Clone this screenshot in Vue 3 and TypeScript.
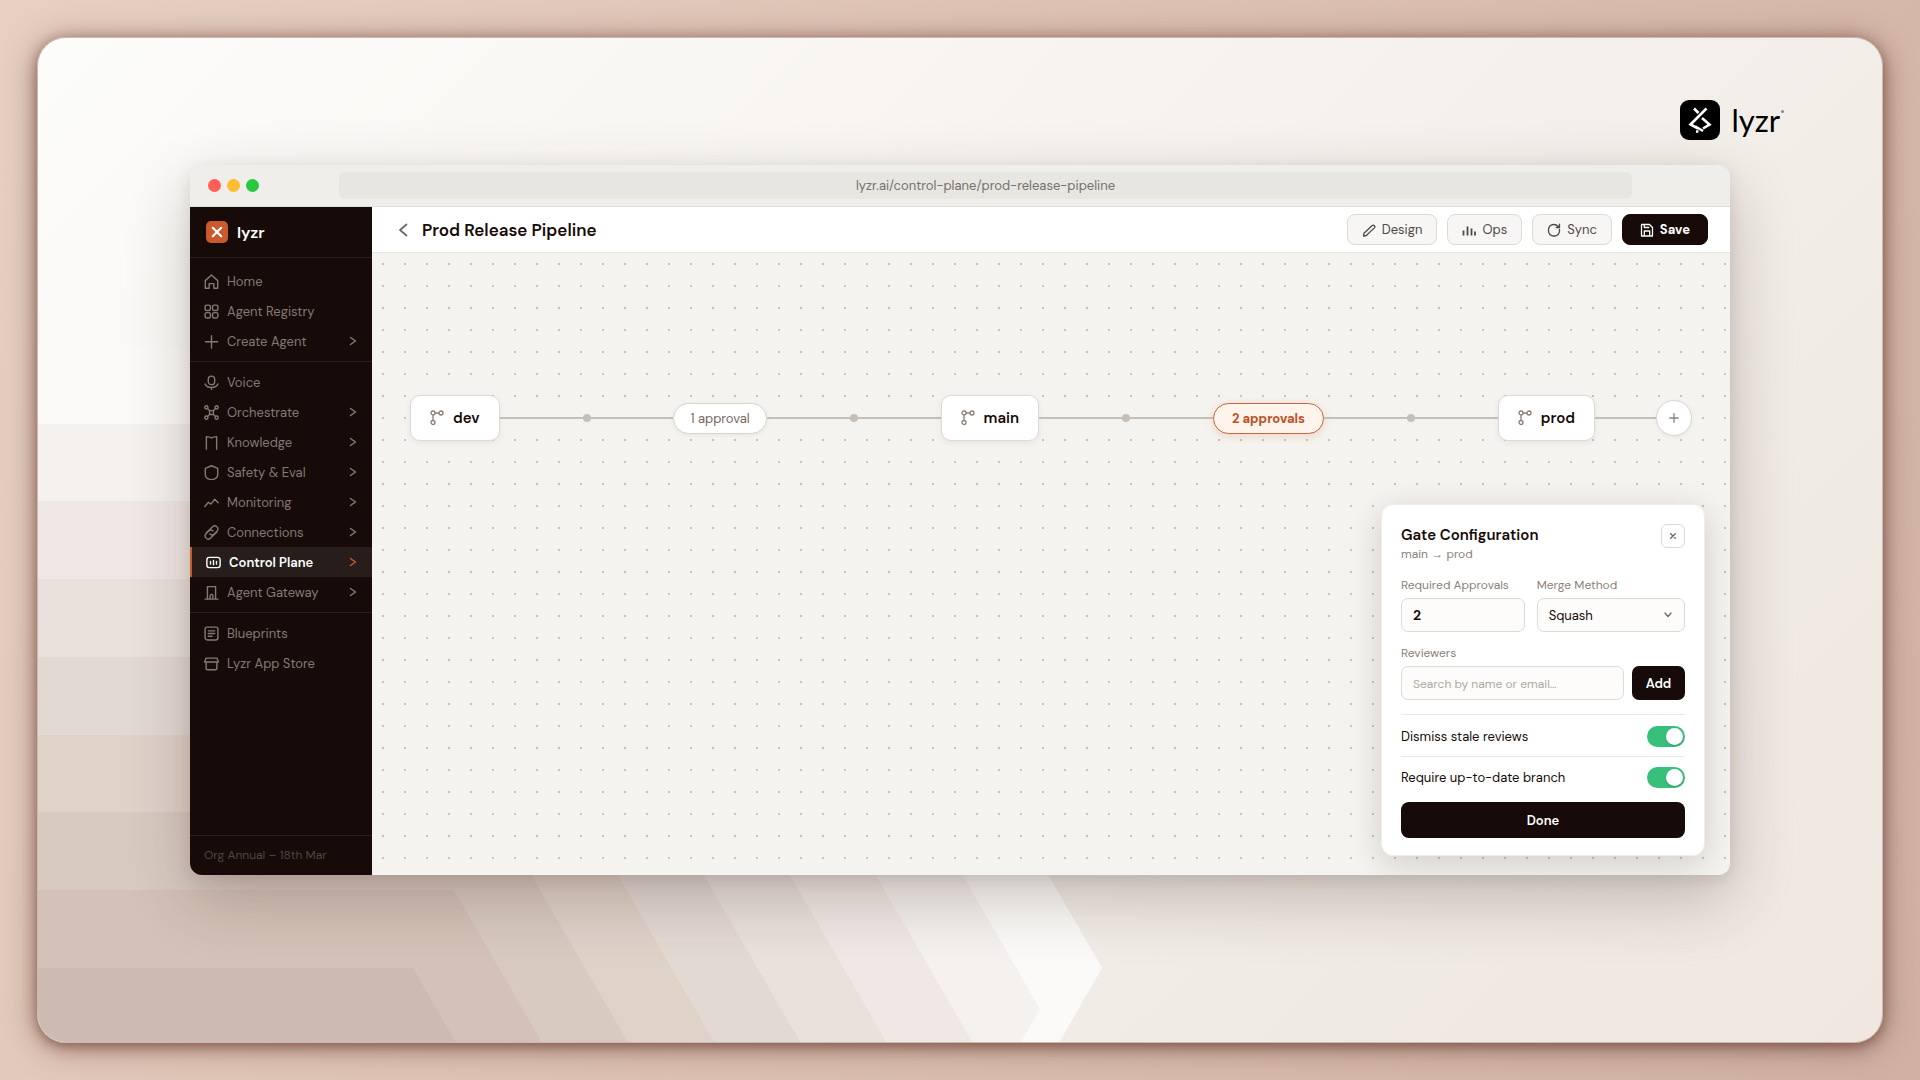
<script setup lang="ts">
import { ref } from 'vue'

interface NavItem {
  label: string
  icon: string
  chevron?: boolean
  active?: boolean
}

const groups: NavItem[][] = [
  [
    { label: 'Home', icon: 'M1.2 6.2 7 1l5.800 5.200V13.300H9.200V9H4.800v4.300H1.200z' },
    {
      label: 'Agent Registry',
      icon: 'M2.500 1h2a1.500 1.500 0 0 1 1.500 1.500v2A1.500 1.500 0 0 1 4.500 6h-2A1.500 1.500 0 0 1 1 4.500v-2A1.500 1.500 0 0 1 2.500 1zM9.500 1h2A1.500 1.500 0 0 1 13 2.500v2A1.500 1.500 0 0 1 11.500 6h-2A1.500 1.500 0 0 1 8 4.500v-2A1.500 1.500 0 0 1 9.500 1zM2.500 8h2A1.500 1.500 0 0 1 6 9.500v2A1.500 1.500 0 0 1 4.500 13h-2A1.500 1.500 0 0 1 1 11.500v-2A1.500 1.500 0 0 1 2.500 8zM9.500 8h2A1.500 1.500 0 0 1 13 9.500v2a1.500 1.500 0 0 1-1.500 1.500h-2A1.500 1.500 0 0 1 8 11.500v-2A1.500 1.500 0 0 1 9.500 8z',
    },
    { label: 'Create Agent', icon: 'M7 1.500v11.500M1.300 7.200h11.400', chevron: true },
  ],
  [
    { label: 'Voice', icon: 'M7 1a3 3 0 0 1 3 3v2a3 3 0 0 1-6 0V4a3 3 0 0 1 3-3zM1 8.300c.8 2 3.200 3.200 6 3.200s5.200-1.200 6-3.200M7 11.500v2.300' },
    {
      label: 'Orchestrate',
      icon: 'M5.200 5.200h3.600v3.600H5.200zM3.300 3.300l1.900 1.900M10.700 3.300 8.800 5.200M3.300 10.700l1.900-1.900M10.700 10.700 8.800 8.800M3.700 2.200a1.500 1.500 0 1 1-3 0a1.500 1.500 0 0 1 3 0zM13.300 2.200a1.500 1.500 0 1 1-3 0a1.500 1.500 0 0 1 3 0zM3.700 11.800a1.500 1.500 0 1 1-3 0a1.500 1.500 0 0 1 3 0zM13.300 11.800a1.500 1.500 0 1 1-3 0a1.500 1.500 0 0 1 3 0z',
      chevron: true,
    },
    { label: 'Knowledge', icon: 'M2.200 13.300V1.500c2 0 3.500.2 4.800 1.300 1.300-1.100 2.800-1.300 4.800-1.300v11.800', chevron: true },
    { label: 'Safety & Eval', icon: 'M7 .7 12.800 3.200v5.800c0 2.600-2.300 4.200-5.800 4.700-3.500-.5-5.800-2.100-5.800-4.700V3.200z', chevron: true },
    { label: 'Monitoring', icon: 'M.8 10.800 4.200 6.800l2.200 1.700L10 4l3.200 3.200', chevron: true },
    {
      label: 'Connections',
      icon: 'M5.600 8.400a2.900 2.900 0 0 0 4 0l2.500-2.600a2.900 2.900 0 0 0-4.100-4.100L2 7.500M8.400 5.600a2.900 2.900 0 0 0-4 0L1.900 8.200a2.900 2.900 0 0 0 4.100 4.100L12 6.500',
      chevron: true,
    },
    {
      label: 'Control Plane',
      icon: 'M3.200 2.200h7.600A2.400 2.400 0 0 1 13.200 4.600v4.800a2.400 2.400 0 0 1-2.400 2.400H3.200A2.400 2.400 0 0 1 .8 9.400V4.600A2.400 2.400 0 0 1 3.200 2.200zM4.200 6v2.500M7 5v4M9.800 6v2.500',
      chevron: true,
      active: true,
    },
    { label: 'Agent Gateway', icon: 'M1 13.200h12M3.200 13V1.500h7.600V13M5.700 13v-3a1.300 1.300 0 0 1 2.600 0v3', chevron: true },
  ],
  [
    { label: 'Blueprints', icon: 'M3 1h8a2 2 0 0 1 2 2v8a2 2 0 0 1-2 2H3a2 2 0 0 1-2-2V3a2 2 0 0 1 2-2zM4 4.500h6M4 7h6M4 9.500h3.500' },
    { label: 'Lyzr App Store', icon: 'M1.800 2h10.400l1.200 3.600H.6zM2 5.600v6.200a1 1 0 0 0 1 1h8a1 1 0 0 0 1-1V5.600' },
  ],
]

const branchIcon =
  'M3 5v5M5 3h4M5 3a2 2 0 1 1-4 0a2 2 0 0 1 4 0zM13 3a2 2 0 1 1-4 0a2 2 0 0 1 4 0zM5 12.500a2 2 0 1 1-4 0a2 2 0 0 1 4 0z'

interface Layer {
  top: number
  points: string
  fill: string
}

// Stacked arrow bands, drawn from the largest to the smallest.
const fills = ['#fbfaf8', '#f4f1ee', '#f0e8e5', '#e9e1dc', '#e3d9d3', '#dfd2c9', '#d8cac1', '#d4c2b8', '#cdbab0']
const layers: Layer[] = fills.map((fill, i) => {
  const top = Math.round(i * 77.7)
  const corner = Math.round(705 - i * 41.3)
  const depth = i === 0 ? 622 : i === 1 ? 585 : 700
  const tipX = corner + Math.round(depth * 0.577)
  const tipY = top + depth
  const footX = tipX - Math.round((900 - tipY) * 0.577)
  const foot = i < 2 ? `${footX},900 0,900` : `0,${tipY}`
  return { top, fill, points: `0,${top} ${corner},${top} ${tipX},${tipY} ${foot}` }
})

const approvals = ref('2')
const method = ref('Squash')
const reviewer = ref('')
const dismissStale = ref(true)
const upToDate = ref(true)
</script>

<template>
  <div class="page">
    <div class="card">
      <svg class="bands" width="1110" height="696" viewBox="0 0 1110 696" aria-hidden="true">
        <polygon v-for="layer in layers" :key="layer.top" :points="layer.points" :fill="layer.fill" />
      </svg>

      <div class="brand">
        <svg width="40" height="40" viewBox="0 0 40 40" aria-hidden="true">
          <rect width="40" height="40" rx="9" fill="#000" />
          <path d="M14 8.500l4.500 4.500M26.500 8.500 10.500 24.500l7.500 4M22 18l7.500 6.500-6.500 4M15.500 26.500l7.500 4.500M16 31.500h2.500" />
        </svg>
        <span class="brand-name">lyzr</span>
        <i class="brand-dot"></i>
      </div>

      <div class="window">
        <div class="titlebar">
          <i class="light red"></i><i class="light yellow"></i><i class="light green"></i>
          <div class="url">lyzr.ai/control-plane/prod-release-pipeline</div>
        </div>

        <div class="body">
          <aside class="sidebar">
            <div class="side-head">
              <svg width="22" height="22" viewBox="0 0 22 22" aria-hidden="true">
                <rect width="22" height="22" rx="5" fill="#c85a2b" />
                <path class="thick" d="M6.800 6.800l8.400 8.400M15.200 6.800l-8.400 8.400" />
              </svg>
              <span>lyzr</span>
            </div>
            <nav>
              <div v-for="(group, g) in groups" :key="g" class="group">
                <a v-for="item in group" :key="item.label" href="#" class="item" :class="{ active: item.active }">
                  <svg class="item-icon" width="15" height="15" viewBox="0 0 14 14" aria-hidden="true"><path :d="item.icon" /></svg>
                  <span>{{ item.label }}</span>
                  <svg v-if="item.chevron" class="chev" width="8" height="10" viewBox="0 0 8 10" aria-hidden="true"><path d="M1.500 1.500 6.500 5l-5 3.500" /></svg>
                </a>
              </div>
            </nav>
            <div class="side-foot">Org Annual – 18th Mar</div>
          </aside>

          <main class="main">
            <header class="header">
              <button class="back" aria-label="Back">
                <svg width="10" height="14" viewBox="0 0 10 14" aria-hidden="true"><path d="M8.500 1.500 2 7l6.500 5.500" /></svg>
              </button>
              <h1>Prod Release Pipeline</h1>
              <div class="actions">
                <button class="tool">
                  <svg width="14" height="14" viewBox="0 0 14 14" aria-hidden="true"><path d="M1.500 13l.5-2.800 8.200-7.600a1.600 1.600 0 0 1 2.200 2.300L4.300 12.500z" /></svg>
                  Design
                </button>
                <button class="tool">
                  <svg width="14" height="14" viewBox="0 0 14 14" aria-hidden="true"><path class="bars" d="M1.500 7.500v5M5.500 3.500v9M9.500 5.500v7M13 8.500v4" /></svg>
                  Ops
                </button>
                <button class="tool">
                  <svg width="14" height="14" viewBox="0 0 14 14" aria-hidden="true"><path d="M12.500 6.500V8a5 5 0 0 1-5 5H6.500A5 5 0 0 1 1.500 8V6.500a5 5 0 0 1 5-5c2 0 3.500.5 5 2M12.500 1.200v3.300H9.200" /></svg>
                  Sync
                </button>
                <button class="tool save">
                  <svg width="14" height="14" viewBox="0 0 14 14" aria-hidden="true"><path d="M1.500 1.500h8l3 3v8.500h-11zM4.300 13V8h5.400v5M4.300 1.500v3h4.500" /></svg>
                  Save
                </button>
              </div>
            </header>

            <div class="canvas">
              <div class="pipeline">
                <div class="node">
                  <svg width="14" height="16" viewBox="0 0 14 16" aria-hidden="true"><path :d="branchIcon" /></svg>dev
                </div>
                <div class="link"><i></i></div>
                <button class="gate">1 approval</button>
                <div class="link"><i></i></div>
                <div class="node">
                  <svg width="14" height="16" viewBox="0 0 14 16" aria-hidden="true"><path :d="branchIcon" /></svg>main
                </div>
                <div class="link"><i></i></div>
                <button class="gate selected">2 approvals</button>
                <div class="link"><i></i></div>
                <div class="node">
                  <svg width="14" height="16" viewBox="0 0 14 16" aria-hidden="true"><path :d="branchIcon" /></svg>prod
                </div>
                <div class="link short"></div>
                <button class="plus" aria-label="Add stage">
                  <svg width="10" height="10" viewBox="0 0 10 10" aria-hidden="true"><path d="M5 .7v8.600M.7 5h8.600" /></svg>
                </button>
              </div>

              <section class="panel">
                <div class="panel-head">
                  <div class="panel-title">
                    <h2>Gate Configuration</h2>
                    <p>main <span class="arrow">→</span> prod</p>
                  </div>
                  <button class="close" aria-label="Close">
                    <svg width="6" height="6" viewBox="0 0 6 6" aria-hidden="true"><path d="M.7.7l4.600 4.600M5.300.7.7 5.300" /></svg>
                  </button>
                </div>
                <div class="fields">
                  <div class="field">
                    <label for="approvals">Required Approvals</label>
                    <input id="approvals" v-model="approvals" class="box strong" type="text" />
                  </div>
                  <div class="field">
                    <label for="method">Merge Method</label>
                    <div class="select-wrap">
                      <select id="method" v-model="method" class="box">
                        <option>Squash</option>
                      </select>
                      <svg width="8" height="6" viewBox="0 0 8 6" aria-hidden="true"><path d="M1 1l3 3.500L7 1" /></svg>
                    </div>
                  </div>
                </div>
                <div class="field">
                  <label for="reviewer">Reviewers</label>
                  <div class="add-row">
                    <input id="reviewer" v-model="reviewer" class="box" type="text" placeholder="Search by name or email…" />
                    <button class="dark add">Add</button>
                  </div>
                </div>
                <div class="toggles">
                  <label class="toggle-row">Dismiss stale reviews<input v-model="dismissStale" type="checkbox" class="switch" /></label>
                  <label class="toggle-row">Require up-to-date branch<input v-model="upToDate" type="checkbox" class="switch" /></label>
                </div>
                <button class="dark done">Done</button>
              </section>
            </div>
          </main>
        </div>
      </div>
    </div>
  </div>
</template>

<style>
body {
  margin: 0;
}
</style>

<style scoped>
* {
  box-sizing: border-box;
}
.page {
  min-height: 100vh;
  padding: 37px;
  display: flex;
  background: linear-gradient(115deg, #e6d0c2 0%, #dcc0b1 50%, #d0b1a3 100%);
  font-family: 'DM Sans', Inter, 'Liberation Sans', sans-serif;
  font-size: 13px;
  color: #170b08;
}
button,
input,
select {
  font: inherit;
  color: inherit;
  margin: 0;
}
button {
  cursor: pointer;
}
svg path {
  fill: none;
  stroke: currentColor;
  stroke-width: 1.3;
  stroke-linecap: round;
  stroke-linejoin: round;
}
svg .thick {
  stroke-width: 2.2;
}
svg .bars {
  stroke-width: 1.8;
  stroke-linecap: butt;
}
.card {
  position: relative;
  flex: 1;
  min-width: 0;
  display: flex;
  padding: 127px 152px 167px;
  border: 1px solid #cdb9af;
  border-radius: 29px;
  background: linear-gradient(135deg, #fcfcfa 0%, #f6f2ee 45%, #efeae3 80%, #f0e7e1 100%);
  box-shadow: 0 3px 12px rgba(95, 50, 38, 0.5), 0 4px 30px rgba(95, 50, 38, 0.55);
}
.bands {
  position: absolute;
  left: 0;
  bottom: 0;
  border-bottom-left-radius: 28px;
}
.brand {
  position: absolute;
  top: 62px;
  right: 98px;
  display: flex;
  align-items: center;
  color: #000;
}
.brand svg path {
  stroke-width: 2.6;
  stroke: #fff;
  stroke-linecap: butt;
  stroke-linejoin: miter;
}
.brand-name {
  margin-left: 11px;
  font-family: Lato, sans-serif;
  font-size: 31px;
  line-height: 40px;
}
.brand-dot {
  width: 3px;
  height: 3px;
  margin: 0 0 18px 1px;
  border-radius: 50%;
  background: #888;
}
.window {
  position: relative;
  flex: 1;
  min-width: 0;
  display: flex;
  flex-direction: column;
  border-radius: 12px;
  overflow: hidden;
  box-shadow: 0 24px 64px rgba(50, 25, 15, 0.24), 0 4px 16px rgba(50, 25, 15, 0.1);
}
.titlebar {
  height: 42px;
  padding: 0 18px;
  display: flex;
  align-items: center;
  gap: 6px;
  background: #efeeeb;
  border-bottom: 1px solid #e0deda;
}
.light {
  width: 13px;
  height: 13px;
  border-radius: 50%;
}
.red {
  background: #ff5f57;
}
.yellow {
  background: #febc2e;
}
.green {
  background: #28c840;
}
.url {
  flex: 1;
  margin: 0 80px 0 74px;
  height: 27px;
  line-height: 27px;
  border-radius: 6px;
  background: #e7e6e1;
  color: #77716c;
  text-align: center;
}
.body {
  flex: 1;
  display: flex;
}
.sidebar {
  width: 182px;
  display: flex;
  flex-direction: column;
  background: #160b08;
  color: #857973;
}
.side-head {
  height: 51px;
  padding: 0 16px;
  display: flex;
  align-items: center;
  gap: 9px;
  border-bottom: 1px solid #2a1f1c;
  color: #fff;
  font-size: 16px;
  font-weight: 600;
}
nav {
  flex: 1;
  padding-top: 3px;
}
.group {
  padding: 5px 0;
  border-bottom: 1px solid #2a1f1c;
}
.group:last-child {
  border-bottom: 0;
}
.item {
  height: 30px;
  padding: 0 15px 0 14px;
  display: flex;
  align-items: center;
  gap: 8px;
  color: inherit;
  text-decoration: none;
}
.chev {
  margin-left: auto;
}
.chev path {
  stroke-width: 1.5;
}
.item.active {
  background: #271d1a;
  border-left: 2px solid #c85a2b;
  color: #fff;
  font-weight: 600;
}
.active .chev {
  color: #c85a2b;
}
.side-foot {
  height: 40px;
  padding: 0 14px;
  line-height: 39px;
  border-top: 1px solid #2a1f1c;
  color: #52453f;
  font-size: 12px;
}
.main {
  flex: 1;
  min-width: 0;
  display: flex;
  flex-direction: column;
}
.header {
  height: 46px;
  padding: 0 22px 0 26px;
  display: flex;
  align-items: center;
  background: #fff;
  border-bottom: 1px solid #e8e5e1;
}
.back {
  width: 24px;
  padding: 0;
  border: 0;
  background: none;
  color: #6d6662;
  line-height: 0;
  text-align: left;
}
.back path {
  stroke-width: 1.7;
}
h1,
h2,
p {
  margin: 0;
}
h1 {
  font-size: 17px;
  font-weight: 600;
}
.actions {
  margin-left: auto;
  display: flex;
  gap: 10px;
}
.tool {
  height: 31px;
  padding: 0 14px;
  display: flex;
  align-items: center;
  gap: 6px;
  border: 1px solid #dedad6;
  border-radius: 8px;
  background: #f7f6f4;
  color: #4f4946;
}
.save {
  padding: 0 17px;
  border-color: #160b08;
  background: #160b08;
  color: #fff;
  font-weight: 700;
}
.canvas {
  position: relative;
  flex: 1;
  padding: 142px 38px;
  background: radial-gradient(circle, #c5c2b9 1px, transparent 1px) 0 0 / 22px 22px #f5f3ef;
}
.pipeline {
  display: flex;
  align-items: center;
}
.node {
  height: 46px;
  padding: 0 19px;
  display: flex;
  align-items: center;
  gap: 9px;
  border: 1px solid #dcdad5;
  border-radius: 10px;
  background: #fff;
  box-shadow: 0 2px 6px rgba(40, 20, 10, 0.06);
  font-size: 15px;
  font-weight: 600;
}
.node svg {
  color: #8b7c75;
}
.link {
  flex: 1;
  height: 2px;
  display: flex;
  align-items: center;
  justify-content: center;
  background: #c4c0b9;
}
.link i {
  width: 8px;
  height: 8px;
  flex: none;
  border-radius: 50%;
  background: #c4c0b9;
}
.link.short {
  flex: 0 0 61px;
}
.gate {
  height: 31px;
  padding: 0 16px;
  border: 1px solid #d9d6d0;
  border-radius: 16px;
  background: #fff;
  box-shadow: 0 1px 4px rgba(40, 20, 10, 0.06);
  color: #746963;
}
.gate.selected {
  padding: 0 18px;
  border-color: #c2673f;
  background: #fff4ec;
  box-shadow: 0 2px 8px rgba(200, 90, 43, 0.2);
  color: #bb5127;
  font-weight: 700;
}
.plus {
  width: 36px;
  height: 36px;
  padding: 0;
  display: flex;
  align-items: center;
  justify-content: center;
  border: 1px solid #d9d6d0;
  border-radius: 50%;
  background: #fff;
  box-shadow: 0 1px 4px rgba(40, 20, 10, 0.06);
  color: #8b847f;
}
.panel {
  position: absolute;
  right: 25px;
  bottom: 19px;
  width: 324px;
  padding: 19px 19px 17px;
  border: 1px solid #f0eeea;
  border-radius: 12px;
  background: #fff;
  box-shadow: 0 8px 32px rgba(30, 20, 15, 0.16);
}
.panel-head {
  display: flex;
  justify-content: space-between;
  align-items: flex-start;
  margin-bottom: 13px;
}
.panel-title {
  padding-top: 2px;
}
h2 {
  font-size: 15px;
  line-height: 19px;
  font-weight: 600;
}
p {
  color: #8b7f79;
  font-size: 12px;
  line-height: 19px;
}
.arrow {
  font-family: 'Liberation Sans', sans-serif;
}
.close {
  width: 24px;
  height: 24px;
  padding: 0;
  display: flex;
  align-items: center;
  justify-content: center;
  border: 1px solid #dedad6;
  border-radius: 6px;
  background: #fff;
  color: #756862;
}
.fields {
  display: grid;
  grid-template-columns: 5fr 6fr;
  gap: 12px;
  margin-bottom: 13px;
}
.field label {
  display: block;
  margin-bottom: 5px;
  color: #8b7f79;
  font-size: 12px;
  line-height: 16px;
}
.box {
  width: 100%;
  min-width: 0;
  height: 34px;
  padding: 0 11px;
  display: block;
  appearance: none;
  border: 1px solid #dedad6;
  border-radius: 7px;
  background: #fdfcfa;
}
.box::placeholder {
  color: #b0a8a1;
  font-size: 12px;
}
.strong {
  font-size: 14px;
  font-weight: 700;
}
.select-wrap {
  position: relative;
}
.select-wrap svg {
  position: absolute;
  right: 13px;
  top: 14px;
  color: #756862;
}
.add-row {
  display: flex;
  gap: 8px;
}
.dark {
  border: 0;
  border-radius: 7px;
  background: #160b08;
  color: #fff;
  font-weight: 600;
}
.add {
  flex: 0 0 53px;
}
.toggles {
  margin-top: 14px;
  border-top: 1px solid #ebe8e4;
}
.toggle-row {
  height: 41px;
  display: flex;
  align-items: center;
  justify-content: space-between;
}
.toggle-row:first-child {
  height: 42px;
  padding-top: 2px;
  border-bottom: 1px solid #ebe8e4;
}
.switch {
  width: 38px;
  height: 21px;
  padding: 2px;
  display: flex;
  justify-content: flex-end;
  appearance: none;
  border-radius: 11px;
  background: #38c07a;
}
.switch:not(:checked) {
  justify-content: flex-start;
  background: #cfcac5;
}
.switch::before {
  content: '';
  width: 17px;
  height: 17px;
  border-radius: 50%;
  background: #fff;
  box-shadow: 0 1px 2px rgba(0, 0, 0, 0.2);
}
.done {
  width: 100%;
  height: 36px;
  margin-top: 4px;
  border-radius: 8px;
  display: block;
}
</style>
